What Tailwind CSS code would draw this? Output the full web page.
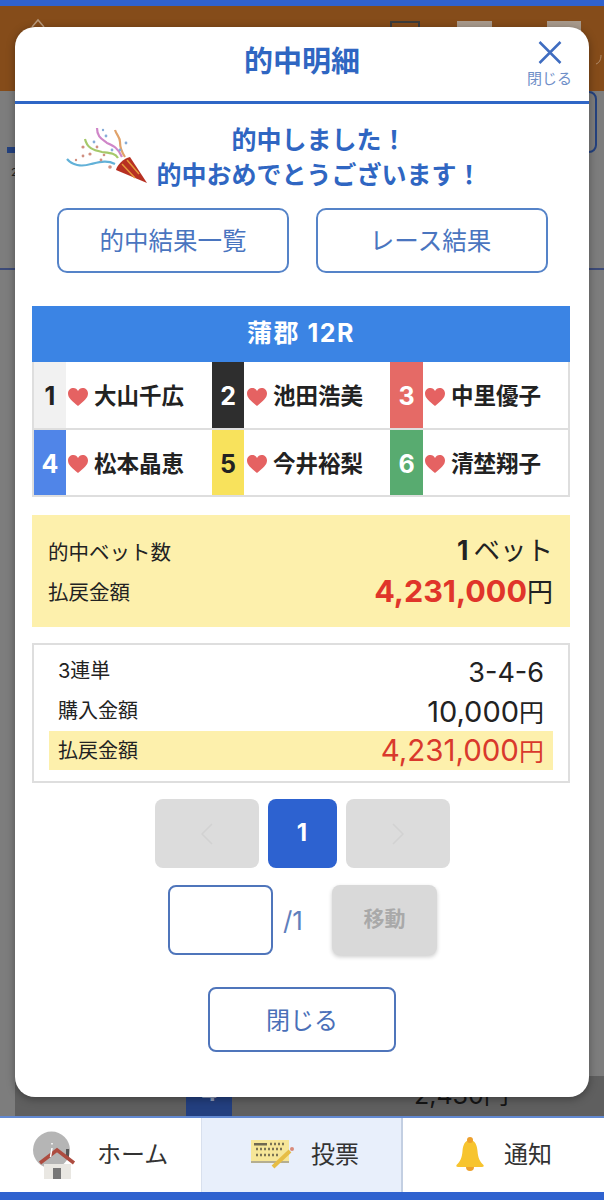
<!DOCTYPE html>
<html lang="ja">
<head>
  <meta charset="UTF-8">
  <meta name="viewport" content="width=device-width, initial-scale=1.0">
  <title>的中明細</title>
  <script src="https://cdn.jsdelivr.net/npm/@tailwindcss/browser@4"></script>
</head>
<body class="font-['Inter','Noto_Sans_CJK_JP',sans-serif] antialiased">
  <div class="relative flex flex-col w-[604px] h-[1200px] overflow-hidden bg-[#7d7d7d]">

    <!-- page behind the modal -->
    <div class="h-[6px] bg-[#2f62cf]"></div>
    <header class="flex items-start h-[85px] pt-[12px] bg-[#854c1a]">
      <svg class="ml-[31px] w-[14px] h-[12px]" viewBox="0 0 14 12"><path d="M1 9 7 2l6 7" fill="none" stroke="#b99a7c" stroke-width="1.500"/></svg>
      <div class="ml-[345px] mt-[3px] w-[30px] h-[12px] border-2 border-[#3c3c3c]"></div>
      <div class="ml-[37px] mt-[3px] w-[35px] h-[12px] bg-[#a89a8c]"></div>
      <div class="ml-[55px] mt-[3px] w-[34px] h-[12px] bg-[#a89a8c]"></div>
      <svg class="ml-[14px] mt-[35px] w-[8px] h-[12px]" viewBox="0 0 8 12"><path d="M1 11c3-1 5-4 5-9" fill="none" stroke="#b08a68" stroke-width="1"/></svg>
    </header>
    <main class="flex flex-col flex-1 bg-[#7d7d7d]">
      <div class="flex justify-between items-end h-[62px] pl-[7px]">
        <div class="w-[20px] h-[6px] bg-[#23417f]"></div>
        <div class="w-[30px] h-[62px] mr-[7px] border-2 border-[#23417f] rounded-r-lg"></div>
      </div>
      <p class="pl-[11px] mt-[12px] text-[11px] leading-[14px] text-[#222]">2</p>
      <div class="mt-[89px] h-[2px] bg-[#3c4a78]"></div>
      <div class="flex-1"></div>
      <div class="flex h-[40px] ml-[15px] bg-[#5f5f5f]">
        <div class="flex items-end justify-center ml-[171px] w-[46px] pb-[11px] bg-[#233f7f] text-[24px] leading-none font-bold text-[#8d9ab8]">4</div>
        <div class="flex items-end ml-[182px] pb-[8px] text-[25px] leading-none text-[#151515]">2,430円</div>
      </div>
    </main>

    <!-- bottom nav -->
    <nav class="flex h-[76px] bg-white border-t-2 border-[#6289d2]">
      <a class="flex items-center w-[201px]">
        <svg class="shrink-0 ml-[30px] w-[50px] h-[50px]" viewBox="30 1119 50 50">
          <circle cx="51.5" cy="1139" r="18.5" fill="#b5b5b5"/>
          <rect x="44" y="1153" width="27" height="15" fill="#e9e7e2"/>
          <rect x="53" y="1157" width="8" height="11" fill="#777"/>
          <rect x="66" y="1138" width="3" height="10" fill="#555"/>
          <path d="M40 1152 57 1139l17 13" fill="none" stroke="#ad4c40" stroke-width="3.5"/>
          <path d="M52 1132v1.500M52 1137l-1.500 9" fill="none" stroke="#fff" stroke-width="1.500"/>
        </svg>
        <span class="ml-[17px] -mt-[1px] text-[24px] leading-none text-[#333]">ホーム</span>
      </a>
      <a class="flex items-center w-[202px] bg-[#e8effb] border-l border-r-2 border-l-[#d8e0ee] border-r-[#c3cfe2]">
        <svg class="shrink-0 ml-[48px] w-[44px] h-[34px]" viewBox="249 1138 44 34">
          <rect x="250" y="1140" width="38" height="23" fill="#f6e698"/>
          <rect x="250" y="1161" width="38" height="2" fill="#b5ae90"/>
          <rect x="253" y="1143" width="13" height="2.500" fill="#6f6850"/>
          <path d="M269 1144h14M255 1149h27M255 1155h22" fill="none" stroke="#7a7355" stroke-width="2.500" stroke-dasharray="2 2"/>
          <path d="M272 1167 289 1151" fill="none" stroke="#e6bd45" stroke-width="4"/>
          <circle cx="291" cy="1149" r="2" fill="#d98a7a"/>
        </svg>
        <span class="ml-[17px] -mt-[1px] text-[24px] leading-none text-[#333]">投票</span>
      </a>
      <a class="flex items-center flex-1">
        <svg class="shrink-0 ml-[53px] -mt-[2px] w-[28px] h-[35px]" viewBox="0 0 28 35">
          <path d="M14 3C9 3 7 8 6.500 14 6 21 4 25 0.500 28 0 29 0.500 30 2 30h24c1.500 0 2-1 1.500-2C24 25 22 21 21.500 14 21 8 19 3 14 3Z" fill="#f7c42f"/>
          <circle cx="14" cy="3" r="3" fill="#eda02c"/>
          <path d="M10 30a4 4 0 0 0 8 0Z" fill="#eda02c"/>
        </svg>
        <span class="ml-[20px] -mt-[1px] text-[24px] leading-none text-[#333]">通知</span>
      </a>
    </nav>
    <div class="h-[8px] bg-[#2f62cf]"></div>

    <!-- modal -->
    <section class="absolute left-[15px] top-[27px] w-[574px] h-[1070px] bg-white rounded-[20px] shadow-[0_2px_8px_rgba(0,0,0,0.35)]">
      <div class="relative flex items-center justify-center h-[77px] border-b-[3px] border-[#2f66c6]">
        <h1 class="text-[29px] leading-none font-bold text-[#2f66c2] -mt-[5px]">的中明細</h1>
        <button class="absolute top-[14px] right-[17px] flex flex-col items-center w-[45px]">
          <svg class="w-[24px] h-[23px]" viewBox="0 0 24 23"><path d="M1.500 1 22.500 22M22.500 1 1.500 22" fill="none" stroke="#3f6cc0" stroke-width="2.500"/></svg>
          <span class="mt-[7px] text-[15px] leading-[16px] text-[#6f8fc8]">閉じる</span>
        </button>
      </div>

      <div class="flex h-[80px] mt-[11px]">
        <svg class="shrink-0 ml-[35px] w-[108px] h-[80px]" viewBox="50 115 108 80">
          <path d="M67 159c5 6 14 8 24 5 9-2 16-4 24 0" fill="none" stroke="#62b1d8" stroke-width="2.200"/>
          <path d="M85 139c2 9 8 11 17 13 8 1 13 1 16 6" fill="none" stroke="#a6c96a" stroke-width="2.200"/>
          <path d="M97 128c0 9 5 11 10 15 7 3 11 5 15 14" fill="none" stroke="#cf86c8" stroke-width="2.200"/>
          <path d="M115 130c2 6 5 7 5 12 0 5 1 9 5 15" fill="none" stroke="#e0a26a" stroke-width="2.200"/>
          <g fill="#d08f80">
            <circle cx="83" cy="156" r="1.400"/><circle cx="90" cy="154" r="1.600"/><circle cx="97" cy="147" r="1.400"/>
            <circle cx="83" cy="147" r="1.600"/><circle cx="101" cy="160" r="1.400"/><circle cx="110" cy="167" r="1.800"/>
            <circle cx="76" cy="160" r="1.200"/><circle cx="104" cy="155" r="1.300"/>
          </g>
          <g fill="#86acd8">
            <circle cx="94" cy="142" r="1.400"/><circle cx="106" cy="136" r="1.400"/><circle cx="120" cy="150" r="1.400"/>
            <circle cx="126" cy="143" r="1.400"/><circle cx="112" cy="150" r="1.400"/><circle cx="103" cy="130" r="1.200"/>
          </g>
          <path d="M116 170c1-5 8-12 14-13l17 26Z" fill="#b73022"/>
          <path d="M122 164l13 14M127 160l12 14" fill="none" stroke="#e79a3a" stroke-width="1.500"/>
        </svg>
        <div class="shrink-0 w-[326px] -ml-[2px] mt-[8px] text-center text-[25px] leading-[35px] font-bold text-[#2f66c2] whitespace-nowrap">
          <p>的中しました！</p>
          <p>的中おめでとうございます！</p>
        </div>
      </div>

      <div class="flex gap-[27px] mt-[13px] ml-[42px]">
        <button class="w-[232px] h-[65px] pt-[2px] border-2 border-[#5583c8] rounded-[10px] text-[24.500px] text-[#4a75bf]">的中結果一覧</button>
        <button class="w-[232px] h-[65px] pt-[2px] pr-[3px] border-2 border-[#5583c8] rounded-[10px] text-[24.500px] text-[#4a75bf]">レース結果</button>
      </div>

      <div class="w-[538px] ml-[17px] mt-[33px]">
        <div class="flex items-center justify-center h-[56px] pb-[1px] bg-[#3b84e4] text-[25px] tracking-[1.500px] font-bold text-white">蒲郡 12R</div>
        <div class="grid grid-cols-3 border-2 border-t-0 border-[#dedede] text-[22.500px] leading-none font-bold text-[#222]">
          <div class="flex items-center h-[68px] border-b-2 border-[#dedede]">
            <span class="flex items-center justify-center self-stretch w-[32px] pt-[3px] bg-[#f1f1f1] text-[25px]">1</span>
            <svg class="ml-[2px] mt-[3px] w-[20px] h-[18px]" viewBox="0 0 20 18"><path d="M10 18C4 13 0 10 0 5.500 0 2 2.500 0 5.500 0 7.500 0 9 1 10 3c1-2 2.500-3 4.500-3C17.500 0 20 2 20 5.500 20 10 16 13 10 18Z" fill="#e56262"/></svg>
            <span class="ml-[6px] mt-[3px]">大山千広</span>
          </div>
          <div class="flex items-center h-[68px] border-b-2 border-[#dedede]">
            <span class="flex items-center justify-center self-stretch w-[32px] pt-[3px] bg-[#2e2e2e] text-[25px] text-white">2</span>
            <svg class="ml-[3px] mt-[3px] w-[20px] h-[18px]" viewBox="0 0 20 18"><path d="M10 18C4 13 0 10 0 5.500 0 2 2.500 0 5.500 0 7.500 0 9 1 10 3c1-2 2.500-3 4.500-3C17.500 0 20 2 20 5.500 20 10 16 13 10 18Z" fill="#e56262"/></svg>
            <span class="ml-[6px] mt-[3px]">池田浩美</span>
          </div>
          <div class="flex items-center h-[68px] border-b-2 border-[#dedede]">
            <span class="flex items-center justify-center self-stretch w-[33px] pt-[3px] bg-[#e56a66] text-[25px] text-white">3</span>
            <svg class="ml-[2px] mt-[3px] w-[20px] h-[18px]" viewBox="0 0 20 18"><path d="M10 18C4 13 0 10 0 5.500 0 2 2.500 0 5.500 0 7.500 0 9 1 10 3c1-2 2.500-3 4.500-3C17.500 0 20 2 20 5.500 20 10 16 13 10 18Z" fill="#e56262"/></svg>
            <span class="ml-[6px] mt-[3px]">中里優子</span>
          </div>
          <div class="flex items-center h-[65px]">
            <span class="flex items-center justify-center self-stretch w-[32px] pt-[3px] bg-[#5085e8] text-[25px] text-white">4</span>
            <svg class="ml-[2px] mt-[3px] w-[20px] h-[18px]" viewBox="0 0 20 18"><path d="M10 18C4 13 0 10 0 5.500 0 2 2.500 0 5.500 0 7.500 0 9 1 10 3c1-2 2.500-3 4.500-3C17.500 0 20 2 20 5.500 20 10 16 13 10 18Z" fill="#e56262"/></svg>
            <span class="ml-[6px] mt-[3px]">松本晶恵</span>
          </div>
          <div class="flex items-center h-[65px]">
            <span class="flex items-center justify-center self-stretch w-[32px] pt-[3px] bg-[#f8e25c] text-[25px]">5</span>
            <svg class="ml-[3px] mt-[3px] w-[20px] h-[18px]" viewBox="0 0 20 18"><path d="M10 18C4 13 0 10 0 5.500 0 2 2.500 0 5.500 0 7.500 0 9 1 10 3c1-2 2.500-3 4.500-3C17.500 0 20 2 20 5.500 20 10 16 13 10 18Z" fill="#e56262"/></svg>
            <span class="ml-[6px] mt-[3px]">今井裕梨</span>
          </div>
          <div class="flex items-center h-[65px]">
            <span class="flex items-center justify-center self-stretch w-[33px] pt-[3px] bg-[#58ab70] text-[25px] text-white">6</span>
            <svg class="ml-[2px] mt-[3px] w-[20px] h-[18px]" viewBox="0 0 20 18"><path d="M10 18C4 13 0 10 0 5.500 0 2 2.500 0 5.500 0 7.500 0 9 1 10 3c1-2 2.500-3 4.500-3C17.500 0 20 2 20 5.500 20 10 16 13 10 18Z" fill="#e56262"/></svg>
            <span class="ml-[6px] mt-[3px]">清埜翔子</span>
          </div>
        </div>

        <div class="h-[112px] mt-[18px] pt-[17px] pl-[16px] pr-[17px] bg-[#fdf0ac] text-[#222]">
          <div class="flex items-center justify-between h-[40px]">
            <span class="pt-[2px] text-[20.500px]">的中ベット数</span>
            <span class="-mt-[4px] text-[26.500px] leading-none"><b class="mr-[5px] font-bold">1</b>ベット</span>
          </div>
          <div class="flex items-center justify-between h-[40px]">
            <span class="pt-[2px] text-[20.500px]">払戻金額</span>
            <span class="-mt-[2px] text-[26px] leading-none"><b class="text-[30.500px] font-bold text-[#e0352a]">4,231,000</b>円</span>
          </div>
        </div>

        <div class="h-[140px] mt-[16px] pt-[6px] border-2 border-[#dedede] text-[#222]">
          <div class="flex items-center justify-between h-[40px] px-[24px]">
            <span class="text-[20px]">3連単</span>
            <span class="pt-[3px] text-[27px] leading-none">3-4-6</span>
          </div>
          <div class="flex items-center justify-between h-[40px] px-[24px]">
            <span class="text-[20px]">購入金額</span>
            <span class="text-[25px] leading-none"><span class="text-[29px]">10,000</span>円</span>
          </div>
          <div class="flex items-center justify-between h-[39px] mx-[15px] px-[9px] bg-[#fdf0ac]">
            <span class="text-[20px]">払戻金額</span>
            <span class="text-[25px] leading-none text-[#d9392c]"><span class="text-[29.500px]">4,231,000</span>円</span>
          </div>
        </div>
      </div>

      <div class="flex gap-[9px] justify-center mt-[16px]">
        <button class="flex items-center justify-center w-[104px] h-[69px] bg-[#dcdcdc] rounded-[8px]">
          <svg class="w-[12px] h-[22px]" viewBox="0 0 12 22"><path d="M11 1 1 11l10 10" fill="none" stroke="#d2d2d2" stroke-width="1.500"/></svg>
        </button>
        <button class="w-[69px] h-[69px] pb-[2px] bg-[#2d62d0] rounded-[8px] text-[24px] font-bold text-white">1</button>
        <button class="flex items-center justify-center w-[104px] h-[69px] bg-[#dcdcdc] rounded-[8px]">
          <svg class="w-[12px] h-[22px]" viewBox="0 0 12 22"><path d="M1 1l10 10L1 21" fill="none" stroke="#d2d2d2" stroke-width="1.500"/></svg>
        </button>
      </div>

      <div class="flex items-center mt-[17px] ml-[153px]">
        <input class="w-[105px] h-[70px] bg-white border-2 border-[#4f75bb] rounded-[8px]" type="text">
        <span class="w-[59px] pl-[10px] text-[26px] text-[#5f80bd]">/1</span>
        <button class="w-[105px] h-[70px] pb-[2px] bg-[#d9d9d9] rounded-[8px] shadow-[0_2px_4px_rgba(0,0,0,0.2)] text-[21px] font-bold text-[#a9a9a9]">移動</button>
      </div>

      <div class="flex justify-center mt-[32px]">
        <button class="w-[188px] h-[65px] pt-[2px] border-2 border-[#4f75bb] rounded-[8px] text-[24px] text-[#4a6fb8]">閉じる</button>
      </div>
    </section>
  </div>
</body>
</html>
